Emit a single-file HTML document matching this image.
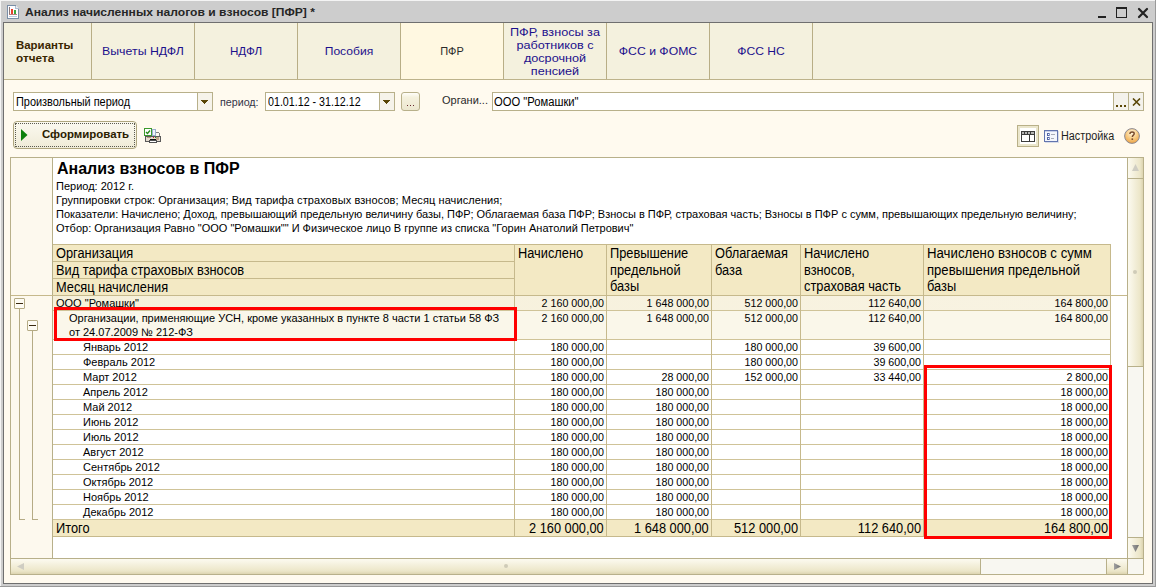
<!DOCTYPE html>
<html><head><meta charset="utf-8"><style>
html,body{margin:0;padding:0;width:1156px;height:587px;overflow:hidden;position:relative;font-family:"Liberation Sans",sans-serif}
div,svg{position:absolute}
.t{white-space:pre}
</style></head><body>
<div style="left:0px;top:0px;width:1156px;height:587px;background:#cdcdcd"></div>
<div style="left:0px;top:0px;width:1156px;height:1px;background:#f4f4f4"></div>
<div style="left:0px;top:0px;width:1px;height:587px;background:#f4f4f4"></div>
<div style="left:3px;top:22px;width:1150px;height:562px;background:#6f6f6f"></div>
<div style="left:4px;top:23px;width:1148px;height:560px;background:#fffaef"></div>
<div style="left:0px;top:586px;width:1156px;height:1px;background:#9a9a9a"></div>
<div style="left:1155px;top:0px;width:1px;height:587px;background:#9a9a9a"></div>
<svg style="position:absolute;left:7px;top:5px" width="12" height="14" viewBox="0 0 12 14" shape-rendering="crispEdges">
<path d="M0.5 0.5 H8.5 L11.5 3.5 V13.5 H0.5 Z" fill="#fdfdff" stroke="#7a8ea6"/>
<path d="M8.5 0.5 V3.5 H11.5" fill="#e4eaf2" stroke="#b0bed0"/>
<rect x="2" y="2" width="1" height="8" fill="#8a7a7a"/>
<rect x="2" y="9" width="8" height="1" fill="#b88080"/>
<rect x="4" y="4" width="2" height="5" fill="#e8402c"/>
<rect x="7" y="5" width="2" height="4" fill="#3ca83c"/>
<rect x="2" y="11" width="8" height="1" fill="#b8cce0"/>
</svg>
<div class="t" style="left:25px;top:2px;font-size:11px;line-height:20px;color:#262626;font-weight:bold;transform:scaleX(1.098);transform-origin:0 0">Анализ начисленных налогов и взносов [ПФР] *</div>
<div style="left:1098px;top:16px;width:8px;height:2px;background:#222"></div>
<div style="left:1116px;top:7px;width:11px;height:11px;border:1px solid #222;border-top-width:2px;box-sizing:border-box"></div>
<svg style="position:absolute;left:1137px;top:7px" width="12" height="12" viewBox="0 0 12 12">
<path d="M2 2 L10 10 M10 2 L2 10" stroke="#222" stroke-width="2.2" stroke-linecap="round"/></svg>
<div style="left:4px;top:23px;width:1148px;height:56px;background:#f4f1de"></div>
<div style="left:4px;top:79px;width:1148px;height:1px;background:#bdb38b"></div>
<div style="left:401px;top:23px;width:102px;height:56px;background:#fff8e1"></div>
<div style="left:91px;top:23px;width:1px;height:56px;background:#b8ae86"></div>
<div style="left:194px;top:23px;width:1px;height:56px;background:#b8ae86"></div>
<div style="left:297px;top:23px;width:1px;height:56px;background:#b8ae86"></div>
<div style="left:400px;top:23px;width:1px;height:56px;background:#b8ae86"></div>
<div style="left:503px;top:23px;width:1px;height:56px;background:#b8ae86"></div>
<div style="left:606px;top:23px;width:1px;height:56px;background:#b8ae86"></div>
<div style="left:709px;top:23px;width:1px;height:56px;background:#b8ae86"></div>
<div style="left:812px;top:23px;width:1px;height:56px;background:#b8ae86"></div>
<div class="t" style="left:16px;top:35px;font-size:11px;line-height:20px;color:#3a2600;font-weight:bold;;transform:scaleX(1.04);transform-origin:0 0">Варианты</div>
<div class="t" style="left:16px;top:48px;font-size:11px;line-height:20px;color:#3a2600;font-weight:bold;;transform:scaleX(1.07);transform-origin:0 0">отчета</div>
<div class="t" style="left:-7px;width:300px;top:41px;font-size:11px;line-height:20px;color:#1c108c;font-weight:normal;text-align:center;;transform:scaleX(1.12);transform-origin:50% 0">Вычеты НДФЛ</div>
<div class="t" style="left:96px;width:300px;top:41px;font-size:11px;line-height:20px;color:#1c108c;font-weight:normal;text-align:center;;transform:scaleX(1.06);transform-origin:50% 0">НДФЛ</div>
<div class="t" style="left:199px;width:300px;top:41px;font-size:11px;line-height:20px;color:#1c108c;font-weight:normal;text-align:center;;transform:scaleX(1.1);transform-origin:50% 0">Пособия</div>
<div class="t" style="left:302px;width:300px;top:41px;font-size:11px;line-height:20px;color:#2a2a2a;font-weight:normal;text-align:center;;transform:scaleX(1.0);transform-origin:50% 0">ПФР</div>
<div class="t" style="left:405px;width:300px;top:22px;font-size:11px;line-height:20px;color:#1c108c;font-weight:normal;text-align:center;;transform:scaleX(1.15);transform-origin:50% 0">ПФР, взносы за</div>
<div class="t" style="left:405px;width:300px;top:35px;font-size:11px;line-height:20px;color:#1c108c;font-weight:normal;text-align:center;;transform:scaleX(1.15);transform-origin:50% 0">работников с</div>
<div class="t" style="left:405px;width:300px;top:48px;font-size:11px;line-height:20px;color:#1c108c;font-weight:normal;text-align:center;;transform:scaleX(1.15);transform-origin:50% 0">досрочной</div>
<div class="t" style="left:405px;width:300px;top:61px;font-size:11px;line-height:20px;color:#1c108c;font-weight:normal;text-align:center;;transform:scaleX(1.15);transform-origin:50% 0">пенсией</div>
<div class="t" style="left:508px;width:300px;top:41px;font-size:11px;line-height:20px;color:#1c108c;font-weight:normal;text-align:center;;transform:scaleX(1.11);transform-origin:50% 0">ФСС и ФОМС</div>
<div class="t" style="left:611px;width:300px;top:41px;font-size:11px;line-height:20px;color:#1c108c;font-weight:normal;text-align:center;;transform:scaleX(1.1);transform-origin:50% 0">ФСС НС</div>
<div style="left:13px;top:92px;width:200px;height:19px;background:#fff;border:1px solid #b8b08a;box-sizing:border-box"></div>
<div style="left:197px;top:92px;width:16px;height:19px;background:#f6f3ea;border:1px solid #b8b08a;box-sizing:border-box"></div>
<svg style="position:absolute;left:201px;top:100px" width="7" height="4" shape-rendering="crispEdges"><path d="M0 0H7V1H6V2H5V3H4V4H3V3H2V2H1V1H0Z" fill="#5a4606"/></svg>
<div class="t" style="left:16px;top:92px;font-size:12px;line-height:20px;color:#000;font-weight:normal;;transform:scaleX(0.91);transform-origin:0 0">Произвольный период</div>
<div class="t" style="left:220px;top:92px;font-size:10.7px;line-height:20px;color:#343448;font-weight:normal;">период:</div>
<div style="left:265px;top:92px;width:130px;height:19px;background:#fff;border:1px solid #b8b08a;box-sizing:border-box"></div>
<div style="left:379px;top:92px;width:16px;height:19px;background:#f6f3ea;border:1px solid #b8b08a;box-sizing:border-box"></div>
<svg style="position:absolute;left:383px;top:100px" width="7" height="4" shape-rendering="crispEdges"><path d="M0 0H7V1H6V2H5V3H4V4H3V3H2V2H1V1H0Z" fill="#5a4606"/></svg>
<div class="t" style="left:268px;top:92px;font-size:12px;line-height:20px;color:#000;font-weight:normal;;transform:scaleX(0.89);transform-origin:0 0">01.01.12 - 31.12.12</div>
<div style="left:401px;top:92px;width:19px;height:19px;background:linear-gradient(#fffefa,#f5f1de 25%,#ece7cf);border:1px solid #b8b08a;border-radius:3px;box-sizing:border-box"></div>
<div style="left:407px;top:105px;width:1px;height:1px;background:#6a2a30"></div>
<div style="left:410px;top:105px;width:1px;height:1px;background:#6a2a30"></div>
<div style="left:413px;top:105px;width:1px;height:1px;background:#6a2a30"></div>
<div class="t" style="left:442px;top:90px;font-size:11px;line-height:20px;color:#2a2a2a;font-weight:normal;">Органи...</div>
<div style="left:492px;top:92px;width:652px;height:19px;background:#fff;border:1px solid #b8b08a;box-sizing:border-box"></div>
<div class="t" style="left:494px;top:92px;font-size:12px;line-height:20px;color:#000;font-weight:normal;;transform:scaleX(0.934);transform-origin:0 0">ООО &quot;Ромашки&quot;</div>
<div style="left:1113px;top:92px;width:16px;height:19px;background:#f4f2ec;border:1px solid #b8b08a;box-sizing:border-box"></div>
<div style="left:1128px;top:92px;width:16px;height:19px;background:#f4f2ec;border:1px solid #b8b08a;box-sizing:border-box"></div>
<div style="left:1116px;top:105px;width:2px;height:2px;background:#5a4606"></div>
<div style="left:1120px;top:105px;width:2px;height:2px;background:#5a4606"></div>
<div style="left:1124px;top:105px;width:2px;height:2px;background:#5a4606"></div>
<svg style="position:absolute;left:1132px;top:98px" width="9" height="8" viewBox="0 0 9 8">
<path d="M1 0.5 L8 7.5 M8 0.5 L1 7.5" stroke="#5a4606" stroke-width="1.6"/></svg>
<div style="left:13px;top:121px;width:124px;height:28px;background:linear-gradient(#fbf9f0,#efebd7);border:1px solid #aea67f;border-radius:4px;box-sizing:border-box"></div>
<div style="left:15px;top:123px;width:120px;height:24px;border:1px dotted #5a5a50;box-sizing:border-box"></div>
<svg style="position:absolute;left:21px;top:129px" width="7" height="12"><path d="M0 0 L6.5 6 L0 12 Z" fill="#0c800c"/></svg>
<div class="t" style="left:42px;top:124px;font-size:11px;line-height:20px;color:#2a2000;font-weight:bold;;transform:scaleX(1.04);transform-origin:0 0">Сформировать</div>
<svg style="position:absolute;left:144px;top:128px" width="17" height="15" viewBox="0 0 17 15" shape-rendering="crispEdges">
<rect x="0.5" y="0.5" width="7" height="7" fill="#fff" stroke="#3c9a2c"/>
<path d="M2 4 L3.5 5.5 L6 2.5" stroke="#2a8a1a" stroke-width="1.4" fill="none" shape-rendering="auto"/>
<rect x="8.5" y="1.5" width="3" height="6" fill="#eef3fa" stroke="#9ab0cc"/>
<path d="M11.5 4.5 H14.5 L15.5 5.5 V8" fill="none" stroke="#808080"/>
<rect x="1.5" y="8.5" width="15" height="5" rx="1" fill="#e6dccf" stroke="#5a5a5a"/>
<rect x="3" y="9" width="4" height="1" fill="#b89a7a"/>
<rect x="12" y="9" width="3" height="3" fill="#c0a488"/>
<rect x="9" y="9" width="1" height="1" fill="#e02020"/>
<rect x="11" y="9" width="1" height="1" fill="#20a020"/>
<rect x="6" y="11" width="6" height="2" fill="#111"/>
<rect x="5.5" y="12.5" width="7" height="2" fill="#fff" stroke="#505050"/>
</svg>
<div style="left:1017px;top:125px;width:22px;height:22px;background:#fff;border:1px solid #b9b088;box-shadow:inset 0 0 0 2px #ebe6cc;box-sizing:border-box"></div>
<svg style="position:absolute;left:1021px;top:131px" width="14" height="11" viewBox="0 0 14 11" shape-rendering="crispEdges">
<rect x="0.5" y="0.5" width="13" height="10" fill="#fff" stroke="#3c3c3c"/>
<rect x="0" y="0" width="14" height="4" fill="#3c3c3c"/>
<rect x="1" y="1" width="2" height="2" fill="#b4b4b4"/><rect x="4" y="1" width="2" height="2" fill="#b4b4b4"/><rect x="7" y="1" width="2" height="2" fill="#b4b4b4"/><rect x="10" y="1" width="3" height="2" fill="#b4b4b4"/>
<rect x="8" y="4" width="1" height="7" fill="#363636"/>
</svg>
<svg style="position:absolute;left:1044px;top:130px" width="15" height="13" viewBox="0 0 15 13" shape-rendering="crispEdges">
<rect x="0.5" y="0.5" width="13" height="11" fill="#f4f6fc" stroke="#6274ae"/>
<rect x="1" y="1" width="12" height="1" fill="#c8d0ea"/>
<rect x="14" y="1" width="1" height="12" fill="#d8dce8"/><rect x="1" y="12" width="14" height="1" fill="#d8dce8"/>
<rect x="3" y="3" width="3" height="3" fill="#5466a8"/><rect x="5" y="3" width="1" height="3" fill="#8c9ac8"/><rect x="4" y="4" width="1" height="1" fill="#fff"/>
<rect x="3" y="7" width="3" height="3" fill="#5466a8"/><rect x="5" y="7" width="1" height="3" fill="#8c9ac8"/><rect x="4" y="8" width="1" height="1" fill="#fff"/>
<rect x="7" y="4" width="4" height="1" fill="#a8acb8"/>
<rect x="7" y="8" width="3" height="1" fill="#a8acb8"/>
</svg>
<div class="t" style="left:1061px;top:126px;font-size:12px;line-height:20px;color:#1e1e1e;font-weight:normal;;transform:scaleX(0.9);transform-origin:0 0">Настройка</div>
<svg style="position:absolute;left:1124px;top:128px" width="16" height="16" viewBox="0 0 16 16">
<defs><radialGradient id="hg" cx="0.5" cy="0.3" r="0.75"><stop offset="0" stop-color="#fff6e0"/><stop offset="0.5" stop-color="#f8cc84"/><stop offset="1" stop-color="#eb9c3a"/></radialGradient></defs>
<circle cx="8" cy="8" r="7.4" fill="url(#hg)" stroke="#8c8a94" stroke-width="1"/>
<path d="M5.9 6 C5.9 4.6 6.9 4 8.1 4 C9.4 4 10.2 4.7 10.2 5.7 C10.2 7.1 8.3 7.2 8.3 9" fill="none" stroke="#76482a" stroke-width="1.4"/>
<rect x="7.5" y="10.4" width="1.6" height="1.5" fill="#76482a"/>
</svg>
<div style="left:10px;top:157px;width:1134px;height:418px;background:#fff;border:1px solid #b8b08a;box-sizing:border-box"></div>
<div style="left:11px;top:158px;width:41px;height:400px;background:#fdf9ee"></div>
<div style="left:52px;top:158px;width:1px;height:400px;background:#b8b08a"></div>
<div class="t" style="left:57px;top:159px;font-size:16px;line-height:20px;color:#000;font-weight:bold;">Анализ взносов в ПФР</div>
<div class="t" style="left:56px;top:176px;font-size:11px;line-height:20px;color:#000;font-weight:normal;">Период: 2012 г.</div>
<div class="t" style="left:56px;top:190px;font-size:11px;line-height:20px;color:#000;font-weight:normal;"><span style='letter-spacing:0.08px'>Группировки строк: Организация; Вид тарифа страховых взносов; Месяц начисления;</span></div>
<div class="t" style="left:56px;top:204px;font-size:11px;line-height:20px;color:#000;font-weight:normal;">Показатели: Начислено; Доход, превышающий предельную величину базы, ПФР; Облагаемая база ПФР; Взносы в ПФР, страховая часть; Взносы в ПФР с сумм, превышающих предельную величину;</div>
<div class="t" style="left:56px;top:218px;font-size:11px;line-height:20px;color:#000;font-weight:normal;">Отбор: Организация Равно &quot;ООО &quot;Ромашки&quot;&quot; И Физическое лицо В группе из списка &quot;Горин Анатолий Петрович&quot;</div>
<div style="left:53px;top:244px;width:1058px;height:51px;background:#f3e9c4"></div>
<div style="left:53px;top:244px;width:1058px;height:1px;background:#c6b98c"></div>
<div style="left:53px;top:261px;width:461px;height:1px;background:#c6b98c"></div>
<div style="left:53px;top:278px;width:461px;height:1px;background:#c6b98c"></div>
<div style="left:11px;top:295px;width:1116px;height:1px;background:#c6b98c"></div>
<div class="t" style="left:56px;top:243px;font-size:14px;line-height:20px;color:#000;font-weight:normal;transform:scaleX(0.915);transform-origin:0 0">Организация</div>
<div class="t" style="left:56px;top:260px;font-size:14px;line-height:20px;color:#000;font-weight:normal;transform:scaleX(0.915);transform-origin:0 0">Вид тарифа страховых взносов</div>
<div class="t" style="left:56px;top:277px;font-size:14px;line-height:20px;color:#000;font-weight:normal;transform:scaleX(0.915);transform-origin:0 0">Месяц начисления</div>
<div class="t" style="left:518px;top:243px;font-size:14px;line-height:20px;color:#000;font-weight:normal;;transform:scaleX(0.915);transform-origin:0 0">Начислено</div>
<div class="t" style="left:610px;top:243px;font-size:14px;line-height:20px;color:#000;font-weight:normal;;transform:scaleX(0.915);transform-origin:0 0">Превышение</div>
<div class="t" style="left:610px;top:260px;font-size:14px;line-height:20px;color:#000;font-weight:normal;;transform:scaleX(0.915);transform-origin:0 0">предельной</div>
<div class="t" style="left:610px;top:276px;font-size:14px;line-height:20px;color:#000;font-weight:normal;;transform:scaleX(0.915);transform-origin:0 0">базы</div>
<div class="t" style="left:715px;top:243px;font-size:14px;line-height:20px;color:#000;font-weight:normal;;transform:scaleX(0.915);transform-origin:0 0">Облагаемая</div>
<div class="t" style="left:715px;top:260px;font-size:14px;line-height:20px;color:#000;font-weight:normal;;transform:scaleX(0.915);transform-origin:0 0">база</div>
<div class="t" style="left:804px;top:243px;font-size:14px;line-height:20px;color:#000;font-weight:normal;;transform:scaleX(0.915);transform-origin:0 0">Начислено</div>
<div class="t" style="left:804px;top:260px;font-size:14px;line-height:20px;color:#000;font-weight:normal;;transform:scaleX(0.915);transform-origin:0 0">взносов,</div>
<div class="t" style="left:804px;top:276px;font-size:14px;line-height:20px;color:#000;font-weight:normal;;transform:scaleX(0.915);transform-origin:0 0">страховая часть</div>
<div class="t" style="left:927px;top:243px;font-size:14px;line-height:20px;color:#000;font-weight:normal;;transform:scaleX(0.945);transform-origin:0 0">Начислено взносов с сумм</div>
<div class="t" style="left:927px;top:260px;font-size:14px;line-height:20px;color:#000;font-weight:normal;;transform:scaleX(0.934);transform-origin:0 0">превышения предельной</div>
<div class="t" style="left:927px;top:276px;font-size:14px;line-height:20px;color:#000;font-weight:normal;;transform:scaleX(0.915);transform-origin:0 0">базы</div>
<div style="left:53px;top:296px;width:1058px;height:14px;background:linear-gradient(90deg,#f6f0da,#f8f3e2)"></div>
<div style="left:53px;top:310px;width:1058px;height:1px;background:#cfc398"></div>
<div class="t" style="left:56px;top:293px;font-size:11px;line-height:20px;color:#000;font-weight:normal;">ООО &quot;Ромашки&quot;</div>
<div class="t" style="right:552px;top:293px;font-size:10.7px;line-height:20px;color:#000;font-weight:normal;text-align:right;">2 160 000,00</div>
<div class="t" style="right:447px;top:293px;font-size:10.7px;line-height:20px;color:#000;font-weight:normal;text-align:right;">1 648 000,00</div>
<div class="t" style="right:358px;top:293px;font-size:10.7px;line-height:20px;color:#000;font-weight:normal;text-align:right;">512 000,00</div>
<div class="t" style="right:235px;top:293px;font-size:10.7px;line-height:20px;color:#000;font-weight:normal;text-align:right;">112 640,00</div>
<div class="t" style="right:48px;top:293px;font-size:10.7px;line-height:20px;color:#000;font-weight:normal;text-align:right;">164 800,00</div>
<div style="left:53px;top:311px;width:1058px;height:28px;background:#faf7ea"></div>
<div style="left:53px;top:339px;width:1058px;height:1px;background:#cfc398"></div>
<div class="t" style="right:552px;top:308px;font-size:10.7px;line-height:20px;color:#000;font-weight:normal;text-align:right;">2 160 000,00</div>
<div class="t" style="right:447px;top:308px;font-size:10.7px;line-height:20px;color:#000;font-weight:normal;text-align:right;">1 648 000,00</div>
<div class="t" style="right:358px;top:308px;font-size:10.7px;line-height:20px;color:#000;font-weight:normal;text-align:right;">512 000,00</div>
<div class="t" style="right:235px;top:308px;font-size:10.7px;line-height:20px;color:#000;font-weight:normal;text-align:right;">112 640,00</div>
<div class="t" style="right:48px;top:308px;font-size:10.7px;line-height:20px;color:#000;font-weight:normal;text-align:right;">164 800,00</div>
<div style="left:53px;top:354px;width:1058px;height:1px;background:#cfc398"></div>
<div class="t" style="left:83px;top:337px;font-size:11px;line-height:20px;color:#000;font-weight:normal;">Январь 2012</div>
<div class="t" style="right:552px;top:337px;font-size:10.7px;line-height:20px;color:#000;font-weight:normal;text-align:right;">180 000,00</div>
<div class="t" style="right:358px;top:337px;font-size:10.7px;line-height:20px;color:#000;font-weight:normal;text-align:right;">180 000,00</div>
<div class="t" style="right:235px;top:337px;font-size:10.7px;line-height:20px;color:#000;font-weight:normal;text-align:right;">39 600,00</div>
<div style="left:53px;top:369px;width:1058px;height:1px;background:#cfc398"></div>
<div class="t" style="left:83px;top:352px;font-size:11px;line-height:20px;color:#000;font-weight:normal;">Февраль 2012</div>
<div class="t" style="right:552px;top:352px;font-size:10.7px;line-height:20px;color:#000;font-weight:normal;text-align:right;">180 000,00</div>
<div class="t" style="right:358px;top:352px;font-size:10.7px;line-height:20px;color:#000;font-weight:normal;text-align:right;">180 000,00</div>
<div class="t" style="right:235px;top:352px;font-size:10.7px;line-height:20px;color:#000;font-weight:normal;text-align:right;">39 600,00</div>
<div style="left:53px;top:384px;width:1058px;height:1px;background:#cfc398"></div>
<div class="t" style="left:83px;top:367px;font-size:11px;line-height:20px;color:#000;font-weight:normal;">Март 2012</div>
<div class="t" style="right:552px;top:367px;font-size:10.7px;line-height:20px;color:#000;font-weight:normal;text-align:right;">180 000,00</div>
<div class="t" style="right:447px;top:367px;font-size:10.7px;line-height:20px;color:#000;font-weight:normal;text-align:right;">28 000,00</div>
<div class="t" style="right:358px;top:367px;font-size:10.7px;line-height:20px;color:#000;font-weight:normal;text-align:right;">152 000,00</div>
<div class="t" style="right:235px;top:367px;font-size:10.7px;line-height:20px;color:#000;font-weight:normal;text-align:right;">33 440,00</div>
<div class="t" style="right:48px;top:367px;font-size:10.7px;line-height:20px;color:#000;font-weight:normal;text-align:right;">2 800,00</div>
<div style="left:53px;top:399px;width:1058px;height:1px;background:#cfc398"></div>
<div class="t" style="left:83px;top:382px;font-size:11px;line-height:20px;color:#000;font-weight:normal;">Апрель 2012</div>
<div class="t" style="right:552px;top:382px;font-size:10.7px;line-height:20px;color:#000;font-weight:normal;text-align:right;">180 000,00</div>
<div class="t" style="right:447px;top:382px;font-size:10.7px;line-height:20px;color:#000;font-weight:normal;text-align:right;">180 000,00</div>
<div class="t" style="right:48px;top:382px;font-size:10.7px;line-height:20px;color:#000;font-weight:normal;text-align:right;">18 000,00</div>
<div style="left:53px;top:414px;width:1058px;height:1px;background:#cfc398"></div>
<div class="t" style="left:83px;top:397px;font-size:11px;line-height:20px;color:#000;font-weight:normal;">Май 2012</div>
<div class="t" style="right:552px;top:397px;font-size:10.7px;line-height:20px;color:#000;font-weight:normal;text-align:right;">180 000,00</div>
<div class="t" style="right:447px;top:397px;font-size:10.7px;line-height:20px;color:#000;font-weight:normal;text-align:right;">180 000,00</div>
<div class="t" style="right:48px;top:397px;font-size:10.7px;line-height:20px;color:#000;font-weight:normal;text-align:right;">18 000,00</div>
<div style="left:53px;top:429px;width:1058px;height:1px;background:#cfc398"></div>
<div class="t" style="left:83px;top:412px;font-size:11px;line-height:20px;color:#000;font-weight:normal;">Июнь 2012</div>
<div class="t" style="right:552px;top:412px;font-size:10.7px;line-height:20px;color:#000;font-weight:normal;text-align:right;">180 000,00</div>
<div class="t" style="right:447px;top:412px;font-size:10.7px;line-height:20px;color:#000;font-weight:normal;text-align:right;">180 000,00</div>
<div class="t" style="right:48px;top:412px;font-size:10.7px;line-height:20px;color:#000;font-weight:normal;text-align:right;">18 000,00</div>
<div style="left:53px;top:444px;width:1058px;height:1px;background:#cfc398"></div>
<div class="t" style="left:83px;top:427px;font-size:11px;line-height:20px;color:#000;font-weight:normal;">Июль 2012</div>
<div class="t" style="right:552px;top:427px;font-size:10.7px;line-height:20px;color:#000;font-weight:normal;text-align:right;">180 000,00</div>
<div class="t" style="right:447px;top:427px;font-size:10.7px;line-height:20px;color:#000;font-weight:normal;text-align:right;">180 000,00</div>
<div class="t" style="right:48px;top:427px;font-size:10.7px;line-height:20px;color:#000;font-weight:normal;text-align:right;">18 000,00</div>
<div style="left:53px;top:459px;width:1058px;height:1px;background:#cfc398"></div>
<div class="t" style="left:83px;top:442px;font-size:11px;line-height:20px;color:#000;font-weight:normal;">Август 2012</div>
<div class="t" style="right:552px;top:442px;font-size:10.7px;line-height:20px;color:#000;font-weight:normal;text-align:right;">180 000,00</div>
<div class="t" style="right:447px;top:442px;font-size:10.7px;line-height:20px;color:#000;font-weight:normal;text-align:right;">180 000,00</div>
<div class="t" style="right:48px;top:442px;font-size:10.7px;line-height:20px;color:#000;font-weight:normal;text-align:right;">18 000,00</div>
<div style="left:53px;top:474px;width:1058px;height:1px;background:#cfc398"></div>
<div class="t" style="left:83px;top:457px;font-size:11px;line-height:20px;color:#000;font-weight:normal;">Сентябрь 2012</div>
<div class="t" style="right:552px;top:457px;font-size:10.7px;line-height:20px;color:#000;font-weight:normal;text-align:right;">180 000,00</div>
<div class="t" style="right:447px;top:457px;font-size:10.7px;line-height:20px;color:#000;font-weight:normal;text-align:right;">180 000,00</div>
<div class="t" style="right:48px;top:457px;font-size:10.7px;line-height:20px;color:#000;font-weight:normal;text-align:right;">18 000,00</div>
<div style="left:53px;top:489px;width:1058px;height:1px;background:#cfc398"></div>
<div class="t" style="left:83px;top:472px;font-size:11px;line-height:20px;color:#000;font-weight:normal;">Октябрь 2012</div>
<div class="t" style="right:552px;top:472px;font-size:10.7px;line-height:20px;color:#000;font-weight:normal;text-align:right;">180 000,00</div>
<div class="t" style="right:447px;top:472px;font-size:10.7px;line-height:20px;color:#000;font-weight:normal;text-align:right;">180 000,00</div>
<div class="t" style="right:48px;top:472px;font-size:10.7px;line-height:20px;color:#000;font-weight:normal;text-align:right;">18 000,00</div>
<div style="left:53px;top:504px;width:1058px;height:1px;background:#cfc398"></div>
<div class="t" style="left:83px;top:487px;font-size:11px;line-height:20px;color:#000;font-weight:normal;">Ноябрь 2012</div>
<div class="t" style="right:552px;top:487px;font-size:10.7px;line-height:20px;color:#000;font-weight:normal;text-align:right;">180 000,00</div>
<div class="t" style="right:447px;top:487px;font-size:10.7px;line-height:20px;color:#000;font-weight:normal;text-align:right;">180 000,00</div>
<div class="t" style="right:48px;top:487px;font-size:10.7px;line-height:20px;color:#000;font-weight:normal;text-align:right;">18 000,00</div>
<div style="left:53px;top:519px;width:1058px;height:1px;background:#cfc398"></div>
<div class="t" style="left:83px;top:502px;font-size:11px;line-height:20px;color:#000;font-weight:normal;">Декабрь 2012</div>
<div class="t" style="right:552px;top:502px;font-size:10.7px;line-height:20px;color:#000;font-weight:normal;text-align:right;">180 000,00</div>
<div class="t" style="right:447px;top:502px;font-size:10.7px;line-height:20px;color:#000;font-weight:normal;text-align:right;">180 000,00</div>
<div class="t" style="right:48px;top:502px;font-size:10.7px;line-height:20px;color:#000;font-weight:normal;text-align:right;">18 000,00</div>
<div class="t" style="left:69px;top:308px;font-size:11px;line-height:20px;color:#000;font-weight:normal;">Организации, применяющие УСН, кроме указанных в пункте 8 части 1 статьи 58 ФЗ</div>
<div class="t" style="left:69px;top:322px;font-size:11px;line-height:20px;color:#000;font-weight:normal;">от 24.07.2009 № 212-ФЗ</div>
<div style="left:53px;top:520px;width:1058px;height:16px;background:#f3e9c4"></div>
<div style="left:53px;top:536px;width:1058px;height:1px;background:#c6b98c"></div>
<div class="t" style="left:56px;top:518px;font-size:14px;line-height:20px;color:#000;font-weight:normal;transform:scaleX(0.915);transform-origin:0 0">Итого</div>
<div class="t" style="right:552px;top:518px;font-size:14px;line-height:20px;color:#000;font-weight:normal;text-align:right;transform:scaleX(0.915);transform-origin:100% 0">2 160 000,00</div>
<div class="t" style="right:447px;top:518px;font-size:14px;line-height:20px;color:#000;font-weight:normal;text-align:right;transform:scaleX(0.915);transform-origin:100% 0">1 648 000,00</div>
<div class="t" style="right:358px;top:518px;font-size:14px;line-height:20px;color:#000;font-weight:normal;text-align:right;transform:scaleX(0.915);transform-origin:100% 0">512 000,00</div>
<div class="t" style="right:235px;top:518px;font-size:14px;line-height:20px;color:#000;font-weight:normal;text-align:right;transform:scaleX(0.915);transform-origin:100% 0">112 640,00</div>
<div class="t" style="right:48px;top:518px;font-size:14px;line-height:20px;color:#000;font-weight:normal;text-align:right;transform:scaleX(0.915);transform-origin:100% 0">164 800,00</div>
<div style="left:514px;top:244px;width:1px;height:293px;background:#c6b98c"></div>
<div style="left:606px;top:244px;width:1px;height:293px;background:#c6b98c"></div>
<div style="left:711px;top:244px;width:1px;height:293px;background:#c6b98c"></div>
<div style="left:800px;top:244px;width:1px;height:293px;background:#c6b98c"></div>
<div style="left:923px;top:244px;width:1px;height:293px;background:#c6b98c"></div>
<div style="left:1110px;top:244px;width:1px;height:293px;background:#c6b98c"></div>
<div style="left:14px;top:298px;width:11px;height:11px;background:#fdfbf3;border:1px solid #b5ab85;box-sizing:border-box;border-radius:1px"></div>
<div style="left:16px;top:303px;width:7px;height:1px;background:#3a2a10"></div>
<div style="left:19px;top:309px;width:1px;height:211px;background:#b5ab85"></div>
<div style="left:19px;top:519px;width:6px;height:1px;background:#b5ab85"></div>
<div style="left:27px;top:320px;width:11px;height:11px;background:#fdfbf3;border:1px solid #b5ab85;box-sizing:border-box;border-radius:1px"></div>
<div style="left:29px;top:325px;width:7px;height:1px;background:#3a2a10"></div>
<div style="left:32px;top:331px;width:1px;height:189px;background:#b5ab85"></div>
<div style="left:32px;top:519px;width:6px;height:1px;background:#b5ab85"></div>
<div style="left:54px;top:307px;width:463px;height:34px;border:3px solid #f00;box-sizing:border-box"></div>
<div style="left:924px;top:365px;width:188px;height:174px;border:3px solid #f00;box-sizing:border-box"></div>
<div style="left:1127px;top:158px;width:16px;height:400px;background:#f8f7f1;border-left:1px solid #b8b08a;box-sizing:border-box"></div>
<div style="left:1127px;top:158px;width:16px;height:21px;background:linear-gradient(90deg,#fcfaf0,#ece6c8 80%,#ddd4b0);border-left:1px solid #b8b08a;border-bottom:1px solid #b8b08a;box-sizing:border-box"></div>
<div style="left:1127px;top:178px;width:16px;height:189px;background:linear-gradient(90deg,#fcfaf0,#ece6c8 80%,#ddd4b0);border:1px solid #b8b08a;border-right:0;box-sizing:border-box"></div>
<div style="left:1127px;top:537px;width:16px;height:21px;background:linear-gradient(90deg,#fcfaf0,#ece6c8 80%,#ddd4b0);border-left:1px solid #b8b08a;border-top:1px solid #b8b08a;box-sizing:border-box"></div>
<svg style="position:absolute;left:1132px;top:164px" width="7" height="7"><path d="M3.5 0 L7 7 H0 Z" fill="#cfcdc2"/></svg>
<svg style="position:absolute;left:1132px;top:545px" width="7" height="7"><defs><linearGradient id="ga" x1="0" y1="0" x2="1" y2="0"><stop offset="0" stop-color="#a0a0a0"/><stop offset="1" stop-color="#707070"/></linearGradient></defs><path d="M0 0 H7 L3.5 7 Z" fill="url(#ga)"/></svg>
<div style="left:1133px;top:270px;width:4px;height:4px;background:#cfcbb8;border-radius:50%"></div>
<div style="left:11px;top:558px;width:1116px;height:16px;background:#f8f7f1;border-top:1px solid #b8b08a;box-sizing:border-box"></div>
<div style="left:11px;top:558px;width:21px;height:16px;background:linear-gradient(#fcfaf0,#ece6c8 80%,#ddd4b0);border-top:1px solid #b8b08a;border-right:1px solid #b8b08a;box-sizing:border-box"></div>
<div style="left:31px;top:558px;width:950px;height:16px;background:linear-gradient(#fcfaf0,#ece6c8 80%,#ddd4b0);border-top:1px solid #b8b08a;border-right:1px solid #b8b08a;box-sizing:border-box"></div>
<div style="left:1106px;top:558px;width:21px;height:16px;background:linear-gradient(#fcfaf0,#ece6c8 80%,#ddd4b0);border-top:1px solid #b8b08a;border-left:1px solid #b8b08a;box-sizing:border-box"></div>
<svg style="position:absolute;left:17px;top:563px" width="7" height="7"><path d="M7 0 V7 L0 3.5 Z" fill="#cfcdc2"/></svg>
<svg style="position:absolute;left:1114px;top:563px" width="7" height="7"><path d="M0 0 V7 L7 3.5 Z" fill="url(#ga)"/></svg>
<div style="left:504px;top:564px;width:4px;height:4px;background:#cfcbb8;border-radius:50%"></div>
<div style="left:1127px;top:558px;width:16px;height:16px;background:#f8f7f1;border-left:1px solid #b8b08a;border-top:1px solid #b8b08a;box-sizing:border-box"></div>
</body></html>
